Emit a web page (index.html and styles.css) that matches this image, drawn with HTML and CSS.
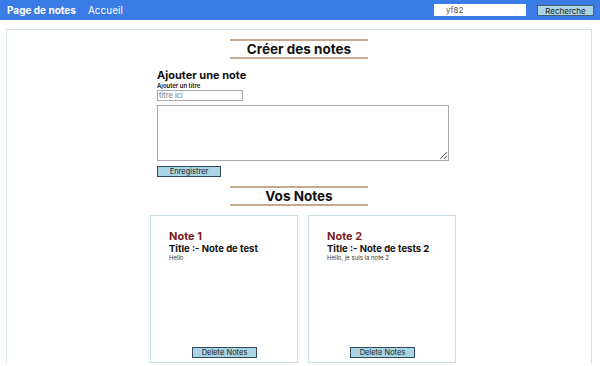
FILE: index.html
```html
<!DOCTYPE html>
<html lang="fr">
<head>
    <meta charset="UTF-8">
    <title>Page de notes</title>
    <link rel="stylesheet" href="styles.css">
</head>
<body>
    <nav class="navbar">
        <a class="brand" href="#">Page de notes</a>
        <a class="nav-link" href="#">Accueil</a>
        <form class="search">
            <input type="search" id="searchTxt" value="yf82">
            <button type="button">Recherche</button>
        </form>
    </nav>

    <div class="container">
        <h2 class="titre">Créer des notes</h2>

        <div class="formulaire">
            <h3>Ajouter une note</h3>
            <label for="titre">Ajouter un titre</label>
            <input type="text" id="titre" placeholder="titre ici">
            <textarea id="texte"></textarea>
            <button class="btn" id="ajouter">Enregistrer</button>
        </div>

        <h2 class="titre">Vos Notes</h2>

        <div class="notes" id="notes">
            <div class="note">
                <h4>Note 1</h4>
                <h5>Title :- Note de test</h5>
                <p>Hello</p>
                <button class="btn">Delete Notes</button>
            </div>
            <div class="note">
                <h4>Note 2</h4>
                <h5>Title :- Note de tests 2</h5>
                <p>Hello, je suis la note 2</p>
                <button class="btn">Delete Notes</button>
            </div>
        </div>
    </div>
</body>
</html>
```

FILE: styles.css
```css
body {
    margin: 0;
    font-family: Inter, "Noto Sans", sans-serif;
    color: #111;
    background: #fff;
}

.navbar {
    display: flex;
    align-items: center;
    height: 20px;
    padding: 0 6px 0 7px;
    background: #3b7be6;
}

.navbar a {
    color: #fff;
    text-decoration: none;
    font-size: 10px;
}

.brand {
    font-weight: 700;
    margin-right: 12px;
}

.search {
    margin-left: auto;
    display: flex;
    align-items: center;
}

.search input {
    width: 92px;
    height: 12px;
    box-sizing: border-box;
    border: none;
    padding: 0 0 0 12px;
    font-family: inherit;
    font-size: 8px;
    color: #555;
    margin: 0 11px 0 0;
}

.search button {
    width: 57px;
    height: 11px;
    box-sizing: border-box;
    padding: 0;
    border: 1px solid #4a6070;
    background: #a9d4e4;
    font-family: inherit;
    font-size: 8px;
    color: #222;
}

.container {
    margin: 9px 8px 0 6px;
    border: 1px solid #d4e3ea;
    border-bottom: none;
    padding-top: 9px;
}

.titre {
    width: 138px;
    margin: 0 auto;
    border-top: 2px solid #c6aa90;
    border-bottom: 2px solid #c6aa90;
    text-align: center;
    font-size: 13.5px;
    line-height: 16px;
    font-weight: 700;
}

.formulaire {
    margin: 10px 0 0 150px;
    width: 292px;
    display: flex;
    flex-direction: column;
    align-items: flex-start;
}

.formulaire h3 {
    margin: 0;
    font-size: 11px;
    line-height: 13px;
}

.formulaire label {
    font-size: 6px;
    font-weight: 600;
    line-height: 7px;
}

.formulaire input {
    width: 86px;
    height: 11px;
    box-sizing: border-box;
    border: 1px solid #aaa;
    padding: 0 1px;
    font-family: inherit;
    font-size: 7.5px;
    margin: 1px 0 0;
}

.formulaire textarea {
    width: 292px;
    height: 56px;
    box-sizing: border-box;
    border: 1px solid #aaa;
    margin: 4px 0 0;
}

.btn {
    height: 11px;
    box-sizing: border-box;
    padding: 0 11px;
    border: 1px solid #34495a;
    background: #a9d4e4;
    font-family: inherit;
    font-size: 7.5px;
    color: #222;
}

#ajouter {
    margin-top: 5px;
    width: 64px;
    padding: 0;
}

.formulaire + .titre {
    margin-top: 9px;
}

.notes {
    display: flex;
    gap: 10px;
    margin: 9px 0 0 143px;
}

.note {
    width: 148px;
    height: 148px;
    box-sizing: border-box;
    border: 1px solid #c9dde6;
    padding: 14px 0 4px 18px;
    display: flex;
    flex-direction: column;
    align-items: flex-start;
}

.note h4 {
    margin: 0;
    font-size: 11px;
    line-height: 13px;
    color: #7a1d1d;
}

.note h5 {
    margin: 0;
    font-size: 9.5px;
    line-height: 11px;
}

.note p {
    margin: 0;
    font-size: 6px;
    line-height: 8px;
    color: #333;
}

.note .btn {
    margin: auto 0 0 23px;
    width: 65px;
    padding: 0;
}
```
